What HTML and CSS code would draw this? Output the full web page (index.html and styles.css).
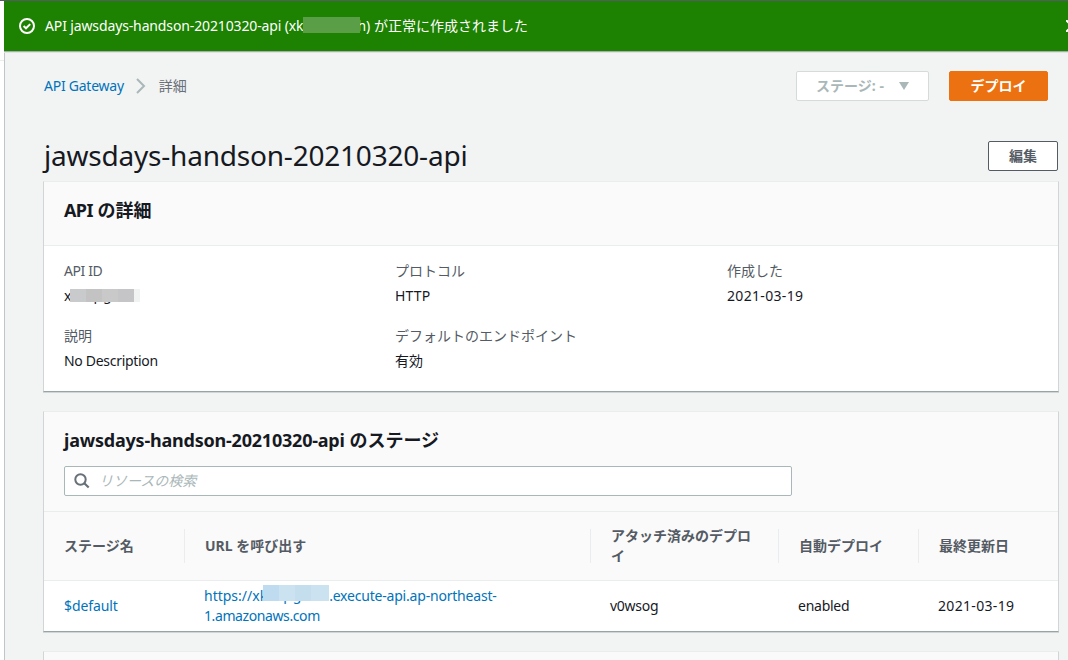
FILE: index.html
```html
<!DOCTYPE html>
<html lang="ja">
<head>
<meta charset="utf-8">
<title>API Gateway</title>
<link rel="stylesheet" href="styles.css">
</head>
<body>
<div class="topbar"></div>
<div class="shell">
  <aside class="rail"></aside>
  <div class="main">
    <div class="flash">
      <svg class="flash-icon" width="16" height="16" viewBox="0 0 16 16" fill="none" stroke="#fff" stroke-width="2"><circle cx="8" cy="8" r="7"/><path d="M4.6 8l2.4 2.3 4.2-4.2"/></svg>
      <p class="flash-text"><span class="t-flash">API jawsdays-handson-20210320-api (xk</span><span class="mask mask-green"></span><span class="flash-end">h)</span> が正常に作成されました</p>
      <svg class="flash-close" width="12" height="12" viewBox="0 0 12 12" stroke="#fff" stroke-width="2"><path d="M0 0l12 12M12 0L0 12"/></svg>
    </div>
    <div class="content">
      <div class="toolbar">
        <nav class="crumbs">
          <a class="link t-gateway">API Gateway</a>
          <svg width="10" height="16" viewBox="0 0 10 16" fill="none" stroke="#aab7b8" stroke-width="2"><path d="M1 1l7 7-7 7"/></svg>
          <span>詳細</span>
        </nav>
        <div class="actions">
          <button class="btn btn-stage">ステージ: - <svg width="10" height="8" viewBox="0 0 10 8"><path d="M0 0h10L5 8z" fill="#aab7b8"/></svg></button>
          <button class="btn btn-primary">デプロイ</button>
        </div>
      </div>
      <div class="title-row">
        <h1>jawsdays-handson-20210320-api</h1>
        <button class="btn btn-edit">編集</button>
      </div>
      <section class="card">
        <header class="card-head"><h2><span class="t-api">API</span> の詳細</h2></header>
        <dl class="details">
          <div><dt class="t-apiid">API ID</dt><dd><span class="t-x">x</span><span class="mask mask-gray"><i>pg</i></span></dd></div>
          <div><dt>プロトコル</dt><dd class="t-http">HTTP</dd></div>
          <div><dt>作成した</dt><dd class="t-date">2021-03-19</dd></div>
          <div><dt>説明</dt><dd class="t-desc">No Description</dd></div>
          <div><dt>デフォルトのエンドポイント</dt><dd>有効</dd></div>
        </dl>
      </section>
      <section class="card">
        <header class="stage-head">
          <h2><span class="t-stage">jawsdays-handson-20210320-api</span> のステージ</h2>
          <div class="search">
            <svg width="16" height="16" viewBox="0 0 16 16" fill="none" stroke="#687078" stroke-width="2"><circle cx="6.5" cy="6.5" r="5.2"/><path d="M10.3 10.3l4.4 4.2" stroke-width="2.2"/></svg>
            <span>リソースの検索</span>
          </div>
        </header>
        <div class="row row-head">
          <div>ステージ名</div><div>URL を呼び出す</div><div>アタッチ済みのデプロイ</div><div>自動デプロイ</div><div>最終更新日</div>
        </div>
        <div class="row row-body">
          <div class="link t-default">$default</div>
          <div class="link"><span class="t-url">https://xk</span><span class="mask mask-blue"><i>pg</i></span><span class="t-url2">.execute-api.ap-northeast-</span><br><span class="t-url3">1.amazonaws.com</span></div>
          <div class="t-id">v0wsog</div>
          <div class="t-enabled">enabled</div>
          <div class="t-date">2021-03-19</div>
        </div>
      </section>
      <section class="card card-next"></section>
    </div>
  </div>
</div>
</body>
</html>
```
FILE: styles.css
```css
* { box-sizing: border-box; }
body, h1, h2, p, dl, dd { margin: 0; }
body {
  width: 1068px; height: 660px; overflow: hidden;
  display: flex; flex-direction: column;
  background: #f2f3f3; color: #16191f;
  font: 14px/20px "Noto Sans", "Noto Sans CJK JP", sans-serif;
}
svg { display: block; flex: none; }
.topbar { height: 1px; background: #545b64; flex: none; }
.shell { display: flex; height: 659px; }
.rail { width: 4px; flex: none; background: linear-gradient(#eaeded, #eaeded) 0 59px / 4px 1px no-repeat #fff; }
.main { flex: 1; min-width: 0; border-left: 1px solid #c0c5c7; }
.flash {
  height: 51px; margin-left: -1px; padding-left: 15px;
  display: flex; align-items: center; overflow: hidden;
  background: #1d8102; color: #fff; border-bottom: 1px solid #a5adad;
  box-shadow: 0 1px 0 #dfe3e3; position: relative;
}
.flash-text { display: flex; white-space: pre; margin-left: 10px; height: 20px; }
.flash-close { position: absolute; left: 1062px; top: 19px; }
.flash-end { margin-left: -3px; }
.mask { display: inline-block; position: relative; z-index: 1; height: 16px; vertical-align: top; }
.mask::after { content: ""; position: absolute; inset: 0; }
.mask i { position: absolute; top: -1px; font-style: normal; }
.mask-green { width: 57px; margin-top: 1px; background: #5a9f47; }
.mask-gray { width: 70px; height: 20px; }
.mask-gray i { left: 23px; letter-spacing: 1px; }
.mask-gray::after { top: 3px; bottom: 4px; background: linear-gradient(90deg, #c9cacc 16px, #c3c3c4 16px 32px, #c9c9ca 32px 48px, #c5c5c7 48px 64px, #f1f3f3 64px); }
.mask-blue { width: 66px; height: 20px; margin-left: -4px; }
.mask-blue i { left: 20px; letter-spacing: 1px; }
.mask-blue::after { top: -1px; bottom: 5px; background: linear-gradient(90deg, #bfdbef 16px, #cbe2f1 16px 32px, #c5deee 32px 48px, #cbe2f1 48px); }
.t-flash { letter-spacing: -0.13px; }
.t-gateway { letter-spacing: -0.25px; }
.t-api { letter-spacing: -0.6px; }
.t-apiid { letter-spacing: -0.4px; }
.t-x { letter-spacing: -1px; }
.t-http { letter-spacing: 0.2px; }
.t-date { letter-spacing: 0.33px; }
.t-desc { letter-spacing: -0.3px; }
.t-stage { letter-spacing: -0.21px; }
.t-default { letter-spacing: -0.1px; }
.t-url2 { letter-spacing: -0.2px; }
.t-url3 { letter-spacing: -0.4px; }
.t-id, .t-enabled { letter-spacing: -0.25px; }
.content { padding: 19px 10px 0 38px; }
.toolbar { height: 30px; display: flex; justify-content: space-between; align-items: center; padding: 0 10px 0 1px; }
.crumbs { display: flex; align-items: center; color: #687078; }
.crumbs svg { margin: 0 13px 0 12px; }
.link { color: #0073bb; }
.actions { display: flex; gap: 20px; }
.btn {
  height: 30px; padding: 0; border: 1px solid #545b64; border-radius: 2px; background: #fff;
  display: flex; align-items: center; justify-content: center;
  font: bold 14px/20px "Noto Sans", "Noto Sans CJK JP", sans-serif; color: #545b64;
}
.btn-stage { width: 133px; border-color: #d5dbdb; color: #aab7b8; gap: 15px; }
.btn-primary { width: 99px; border-color: #ec7211; background: #ec7211; color: #fff; }
.btn-edit { width: 70px; }
.title-row { display: flex; justify-content: space-between; align-items: center; margin-top: 40px; height: 30px; }
h1 { font-weight: 400; font-size: 28px; line-height: 36px; padding: 0 0 2px 1px; letter-spacing: -0.21px; white-space: nowrap; }
h2 { font-size: 18px; line-height: 22px; }
.card {
  margin: 10px -1px 0 0; background: #fff; border-top: 1px solid #eaeded;
  border-left: 1px solid #d0d5d6; border-right: 1px solid #d0d5d6; border-bottom: 1px solid #95a5a6;
  box-shadow: 0 1px 0 #d0d5d6;
}
.card + .card { margin-top: 19px; }
.card-head { height: 64px; padding: 17px 20px; background: #fafafa; border-bottom: 1px solid #eaeded; }
.details { display: grid; grid-template-columns: 331px 332px 1fr; gap: 20px 0; padding: 15px 20px 20px; height: 145px; align-content: start; }
dt { color: #545b64; }
dd { margin-top: 5px; }
.stage-head { height: 100px; padding: 17px 20px; background: #fafafa; border-bottom: 1px solid #eaeded; }
.search { width: 728px; height: 30px; margin-top: 15px; padding-left: 9px; display: flex; align-items: center; gap: 9px; background: #fff; border: 1px solid #aab7b8; border-radius: 2px; color: #aab7b8; font-style: italic; }
.row { display: grid; grid-template-columns: 141px 406px 188px 140px 1fr; align-items: center; }
.row > div { padding: 0 19px 0 20px; }
.row-head { height: 69px; background: #fafafa; border-bottom: 1px solid #eaeded; color: #545b64; font-weight: 700; }
.row-head > div { height: 34px; display: flex; align-items: center; border-right: 1px solid #eaeded; }
.row-head > div:last-child { border-right: 0; }
.row-body { height: 50px; }
.row-body > div { white-space: nowrap; }
.row-body > div + div { padding-left: 19px; }
.card-next { height: 40px; background: #fafafa; }
```
